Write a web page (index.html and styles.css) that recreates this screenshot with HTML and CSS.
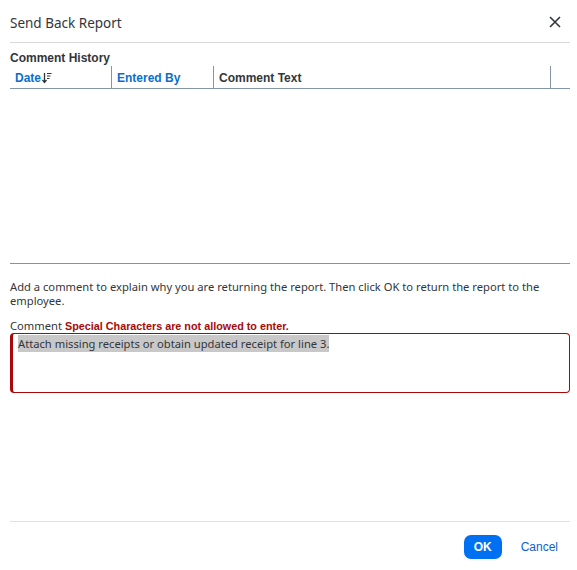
FILE: index.html
```html
<!DOCTYPE html>
<html>
<head>
<meta charset="utf-8">
<link rel="stylesheet" href="styles.css">
</head>
<body>
<div class="dialog">
  <div class="header">
    <div class="title">Send Back Report</div>
    <svg class="close" width="12" height="12" viewBox="0 0 12 12"><path d="M1 1 L11 11 M11 1 L1 11" stroke="#32363a" stroke-width="1.6" fill="none"/></svg>
  </div>
  <div class="section-title">Comment History</div>
  <div class="table">
    <div class="thead">
      <div class="th col-date link">Date<svg class="sort" width="10" height="12" viewBox="0 0 10 12"><path d="M2.5 1 V10 M0.5 8 L2.5 10.5 L4.5 8" stroke="#32363a" stroke-width="1.3" fill="none"/><path d="M5 1.5 H9.5 M5 4 H8.5 M5 6.5 H7.5" stroke="#32363a" stroke-width="1.1"/></svg></div>
      <div class="th col-by link">Entered By</div>
      <div class="th col-text">Comment Text</div>
      <div class="th col-end"></div>
    </div>
    <div class="tbody"></div>
  </div>
  <p class="info">Add a comment to explain why you are returning the report. Then click OK to return the report to the employee.</p>
  <div class="label">Comment <span class="error">Special Characters are not allowed to enter.</span></div>
  <div class="textarea"><span class="sel">Attach missing receipts or obtain updated receipt for line 3.</span></div>
  <div class="spacer"></div>
  <div class="footer">
    <button class="ok">OK</button>
    <button class="cancel">Cancel</button>
  </div>
</div>
</body>
</html>
```
FILE: styles.css
```css
html, body {
  margin: 0;
  padding: 0;
  background: #fff;
}
body {
  font-family: "Noto Sans", "Open Sans", sans-serif;
  color: #32363a;
}
.dialog {
  width: 560px;
  height: 570px;
  padding: 0 7px 0 10px;
  display: flex;
  flex-direction: column;
}
.header {
  height: 43px;
  border-bottom: 1px solid #d9d9d9;
  display: flex;
  align-items: center;
  justify-content: space-between;
  box-sizing: border-box;
  flex: none;
}
.title {
  font-size: 13.5px;
  color: #32363a;
  padding-top: 4px;
}
.close {
  margin-right: 9px;
  margin-top: 1px;
}
.section-title {
  font-family: "Liberation Sans", Arial, sans-serif;
  font-weight: bold;
  font-size: 12px;
  margin-top: 8px;
  height: 15px;
  line-height: 15px;
  color: #32363a;
}
.table {
  flex: none;
}
.thead {
  display: flex;
  height: 23px;
  border-bottom: 1px solid #8396a8;
  box-sizing: border-box;
}
.th {
  font-family: "Liberation Sans", Arial, sans-serif;
  font-weight: bold;
  font-size: 12px;
  line-height: 22px;
  padding-left: 5px;
  padding-top: 1px;
  border-right: 1px solid #8396a8;
  box-sizing: border-box;
  display: flex;
  align-items: center;
  color: #32363a;
}
.th.link {
  color: #0a6ed1;
}
.col-date { width: 102px; }
.col-by { width: 102px; }
.col-text { width: 337px; }
.col-end { flex: 1; border-right: none; }
.sort {
  margin-left: 1px;
}
.tbody {
  height: 174px;
  border-bottom: 1px solid #89919a;
}
.info {
  font-size: 11.2px;
  line-height: 14px;
  margin: 16px 0 0 0;
  color: #32363a;
}
.label {
  font-size: 11.2px;
  line-height: 14px;
  margin-top: 11px;
  color: #32363a;
}
.error {
  font-family: "Liberation Sans", Arial, sans-serif;
  font-weight: bold;
  font-size: 10.8px;
  color: #aa0808;
}
.textarea {
  margin-top: 0;
  height: 60px;
  box-sizing: border-box;
  border: 1px solid #aa0808;
  border-left: 3px solid #aa0808;
  border-radius: 4px;
  padding: 2px 5px;
  font-size: 11.2px;
  line-height: 16px;
  color: #32363a;
}
.sel {
  background: #c8c8c8;
  padding: 1px 0;
}
.spacer {
  flex: 1;
}
.footer {
  flex: none;
  height: 48px;
  border-top: 1px solid #e0e0e0;
  display: flex;
  align-items: center;
  justify-content: flex-end;
  gap: 10px;
  padding-right: 3px;
  margin-bottom: 0;
}
.ok {
  font-family: "Liberation Sans", Arial, sans-serif;
  font-weight: bold;
  font-size: 12px;
  color: #fff;
  background: #0070f2;
  border: none;
  border-radius: 7px;
  width: 38px;
  height: 24px;
  padding: 0;
  margin-top: 2px;
}
.cancel {
  font-family: "Liberation Sans", Arial, sans-serif;
  font-size: 12px;
  color: #0a5fd1;
  background: none;
  border: none;
  padding: 0 9px;
  height: 24px;
  margin-top: 2px;
}
```
